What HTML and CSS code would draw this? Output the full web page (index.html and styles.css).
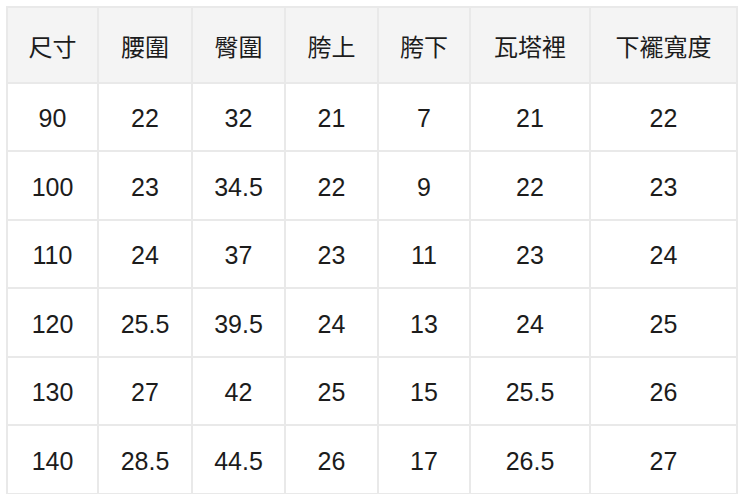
FILE: index.html
```html
<!DOCTYPE html>
<html lang="zh-Hant">
<head>
<meta charset="utf-8">
<link rel="stylesheet" href="styles.css">
</head>
<body>
<div class="wrap">
<table class="size-table">
<colgroup>
<col class="c1"><col class="c2"><col class="c3"><col class="c4"><col class="c5"><col class="c6"><col class="c7">
</colgroup>
<thead>
<tr><th>尺寸</th><th>腰圍</th><th>臀圍</th><th>胯上</th><th>胯下</th><th>瓦塔裡</th><th>下襬寬度</th></tr>
</thead>
<tbody>
<tr class="r-a"><td>90</td><td>22</td><td>32</td><td>21</td><td>7</td><td>21</td><td>22</td></tr>
<tr class="r-b"><td>100</td><td>23</td><td>34.5</td><td>22</td><td>9</td><td>22</td><td>23</td></tr>
<tr class="r-a"><td>110</td><td>24</td><td>37</td><td>23</td><td>11</td><td>23</td><td>24</td></tr>
<tr class="r-b"><td>120</td><td>25.5</td><td>39.5</td><td>24</td><td>13</td><td>24</td><td>25</td></tr>
<tr class="r-a"><td>130</td><td>27</td><td>42</td><td>25</td><td>15</td><td>25.5</td><td>26</td></tr>
<tr class="r-b"><td>140</td><td>28.5</td><td>44.5</td><td>26</td><td>17</td><td>26.5</td><td>27</td></tr>
</tbody>
</table>
</div>
</body>
</html>
```
FILE: styles.css
```css
html, body {
  margin: 0;
  padding: 0;
  background: #ffffff;
}
.wrap {
  padding: 6px 0 0 6px;
}
.size-table {
  border-collapse: collapse;
  table-layout: fixed;
  width: 732px;
  font-family: "Liberation Sans", "Noto Sans CJK TC", sans-serif;
  font-size: 25px;
  color: #1c1c1c;
}
.c1 { width: 91px; }
.c2 { width: 94px; }
.c3 { width: 93px; }
.c4 { width: 93px; }
.c5 { width: 92px; }
.c6 { width: 120px; }
.c7 { width: 147px; }
.size-table th,
.size-table td {
  border: 2px solid #e9e9e9;
  text-align: center;
  vertical-align: middle;
  padding: 0;
  font-weight: normal;
  white-space: nowrap;
}
.size-table td {
  padding-top: 3px;
}
.size-table th {
  background: #f4f4f4;
  height: 74px;
  font-family: "Noto Sans CJK TC", sans-serif;
  font-size: 24px;
}
.r-a td { height: 63px; }
.r-b td { height: 64px; }
```
